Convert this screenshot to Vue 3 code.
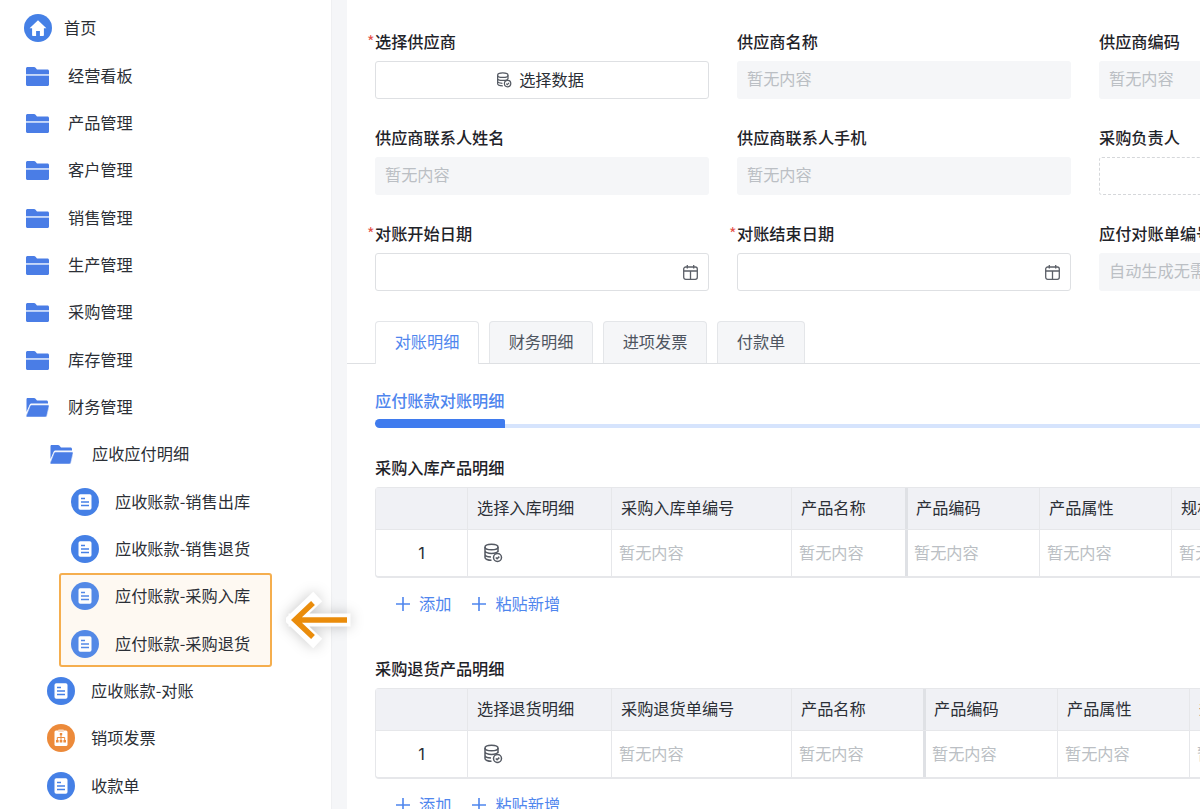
<script setup>
const navGroups = [
  { hl: false, items: [
    { label: '首页', icon: 'home', cls: 'r-home' },
    { label: '经营看板', icon: 'folder', cls: 'r-top' },
    { label: '产品管理', icon: 'folder', cls: 'r-top' },
    { label: '客户管理', icon: 'folder', cls: 'r-top' },
    { label: '销售管理', icon: 'folder', cls: 'r-top' },
    { label: '生产管理', icon: 'folder', cls: 'r-top' },
    { label: '采购管理', icon: 'folder', cls: 'r-top' },
    { label: '库存管理', icon: 'folder', cls: 'r-top' },
    { label: '财务管理', icon: 'open', cls: 'r-top' },
    { label: '应收应付明细', icon: 'open', cls: 'r-sub' },
    { label: '应收账款-销售出库', icon: 'doc', cls: 'r-leaf2' },
    { label: '应收账款-销售退货', icon: 'doc', cls: 'r-leaf2' }
  ] },
  { hl: true, items: [
    { label: '应付账款-采购入库', icon: 'doc', cls: 'r-hl' },
    { label: '应付账款-采购退货', icon: 'doc', cls: 'r-hl' }
  ] },
  { hl: false, items: [
    { label: '应收账款-对账', icon: 'doc', cls: 'r-leaf1' },
    { label: '销项发票', icon: 'org', cls: 'r-leaf1' },
    { label: '收款单', icon: 'doc', cls: 'r-leaf1' }
  ] }
]

const fields = [
  { label: '选择供应商', req: true, type: 'button' },
  { label: '供应商名称', type: 'ro', text: '暂无内容' },
  { label: '供应商编码', type: 'ro', text: '暂无内容' },
  { label: '供应商联系人姓名', type: 'ro', text: '暂无内容' },
  { label: '供应商联系人手机', type: 'ro', text: '暂无内容' },
  { label: '采购负责人', type: 'dashed' },
  { label: '对账开始日期', req: true, type: 'date' },
  { label: '对账结束日期', req: true, type: 'date' },
  { label: '应付对账单编号', type: 'ro', text: '自动生成无需填写' }
]

const tabs = ['对账明细', '财务明细', '进项发票', '付款单']

const tables = [
  { title: '采购入库产品明细', cls: 't1', pick: '选择入库明细', no: '采购入库单编号' },
  { title: '采购退货产品明细', cls: 't2', pick: '选择退货明细', no: '采购退货单编号' }
]
const restCols = ['产品名称', '产品编码', '产品属性', '规格型号']
</script>

<template>
  <div class="page">
    <aside class="side">
      <div v-for="(g, gi) in navGroups" :key="gi" class="group" :class="{ hl: g.hl }">
        <div v-for="it in g.items" :key="it.label" class="row" :class="it.cls">
          <svg v-if="it.icon === 'home'" class="ic-round" viewBox="0 0 28 28">
            <circle cx="14" cy="14" r="14" fill="#4580e6" />
            <path d="M14 6.2 5.6 14.2h2.5v7a.8.8 0 0 0 .8.8h3.2v-5h3.8v5h3.2a.8.8 0 0 0 .8-.8v-7h2.5z" fill="#fff" />
          </svg>
          <svg v-else-if="it.icon === 'folder'" class="ic-folder" viewBox="0 0 23 19">
            <path d="M1.5 0h6.6c.5 0 .9.2 1.2.5L11 2.400h10.500c.8 0 1.500.7 1.500 1.500V7H0V1.500C0 .7.700 0 1.500 0z" fill="#4a7de6" />
            <path d="M0 8.600h23v8.900c0 .8-.7 1.500-1.500 1.500h-20C.7 19 0 18.300 0 17.500z" fill="#4a7de6" />
            <rect y="7" width="23" height="1.600" fill="#c6d7f8" />
          </svg>
          <svg v-else-if="it.icon === 'open'" class="ic-folder" viewBox="0 0 23 19">
            <path d="M1.500 0h6.600c.5 0 .9.2 1.200.5L11 2.400h9.500c.8 0 1.500.7 1.500 1.500V5.500H5.600c-1 0-1.800.6-2.100 1.500L.5 14V1.500C.5.700.7 0 1.500 0z" fill="#4a7de6" />
            <path d="M5.700 7H22c.7 0 1.200.6 1 1.300L20.800 17.700c-.2.800-.9 1.300-1.700 1.300H1.400c-.8 0-1.300-.7-1.100-1.400L3.900 8.400C4.200 7.600 4.900 7 5.700 7z" fill="#4a7de6" stroke="#d5e1fa" stroke-width=".6" />
          </svg>
          <svg v-else-if="it.icon === 'doc'" class="ic-round" viewBox="0 0 28 28">
            <circle cx="14" cy="14" r="14" fill="#4580e6" />
            <rect x="7.500" y="6.200" width="13" height="15.600" rx="1.800" fill="#fff" />
            <path d="M10 10.500h4M10 14h8M10 17.500h8" stroke="#4580e6" stroke-width="1.300" fill="none" />
          </svg>
          <svg v-else class="ic-round" viewBox="0 0 28 28">
            <circle cx="14" cy="14" r="14" fill="#ec8a3a" />
            <rect x="7.500" y="6.500" width="13" height="15.500" rx="1.500" fill="#fff" />
            <rect x="11" y="5.500" width="6" height="2.600" rx="1" fill="#f8d9bf" />
            <path d="M14 10.500v3M10.300 16v-2.500h7.400V16M14 13.500V16" stroke="#ec8a3a" stroke-width="1" fill="none" />
            <path d="M9 16h2.600v2.400H9zM12.700 16h2.600v2.400h-2.600zM16.400 16H19v2.400h-2.600zM12.800 9h2.400v2.200h-2.400z" fill="#ec8a3a" />
          </svg>
          <span class="row-text">{{ it.label }}</span>
        </div>
      </div>
    </aside>
    <div class="gutter"></div>

    <svg class="arrow" viewBox="0 0 70 60" aria-hidden="true">
      <path d="M58 30H9M27 11 7 30l20 19" fill="none" stroke="#fff" stroke-width="13" stroke-linecap="square" stroke-linejoin="miter" />
      <path d="M61 30H11M27 13 9 30l18 17" fill="none" stroke="#ea8c0b" stroke-width="5.500" />
    </svg>

    <main class="main">
      <section class="form">
        <div v-for="f in fields" :key="f.label" class="field">
          <label class="flabel"><i v-if="f.req" class="req">*</i>{{ f.label }}</label>
          <div v-if="f.type === 'button'" class="ctl ctl-btn">
            <svg class="db-sm" viewBox="0 0 20 20">
              <g fill="none" stroke="#555a63" stroke-width="1.500">
                <ellipse cx="8.500" cy="4" rx="6.500" ry="2.800" />
                <path d="M2 4v10.500c0 1.500 2.900 2.800 6.500 2.800M2 7.700c0 1.500 2.900 2.800 6.500 2.800s6.500-1.300 6.500-2.800M2 11.300c0 1.500 2.900 2.700 6 2.800M15 4v5" />
                <circle cx="14.500" cy="14.500" r="4" />
                <path d="m12.800 14.500 1.300 1.300 2.200-2.200" />
              </g>
            </svg>
            <span class="tx">选择数据</span>
          </div>
          <div v-else-if="f.type === 'ro'" class="ctl ctl-ro">{{ f.text }}</div>
          <div v-else-if="f.type === 'dashed'" class="ctl ctl-dashed"></div>
          <div v-else class="ctl ctl-date">
            <svg class="cal" viewBox="0 0 15 15">
              <g fill="none" stroke="#5c6068" stroke-width="1.300">
                <rect x=".7" y="2" width="13.600" height="12.300" rx="2" />
                <path d="M.7 6h13.600M4.300 0v3.600M10.700 0v3.600M7.500 6v8.300" />
              </g>
            </svg>
          </div>
        </div>
      </section>

      <nav class="tabs">
        <div v-for="(t, i) in tabs" :key="t" class="tab" :class="{ active: i === 0 }">{{ t }}</div>
      </nav>

      <section class="detail">
        <div class="subtitle">应付账款对账明细</div>
        <div class="progress"><div class="p-on"></div><div class="p-off"></div></div>

        <div v-for="tb in tables" :key="tb.cls" class="block">
          <div class="btitle">{{ tb.title }}</div>
          <div class="table" :class="tb.cls">
            <div class="tr th">
              <div class="cell"></div>
              <div class="cell">{{ tb.pick }}</div>
              <div class="cell">{{ tb.no }}</div>
              <div v-for="(c, ci) in restCols" :key="c" class="cell" :class="{ frozen: ci === 0 }">{{ c }}</div>
            </div>
            <div class="tr td">
              <div class="cell idx">1</div>
              <div class="cell">
                <svg class="db" viewBox="0 0 20 20">
                  <g fill="none" stroke="#555a63" stroke-width="1.500">
                    <ellipse cx="8.500" cy="4" rx="6.500" ry="2.800" />
                    <path d="M2 4v10.500c0 1.500 2.900 2.800 6.500 2.800M2 7.700c0 1.500 2.900 2.800 6.500 2.800s6.500-1.300 6.500-2.800M2 11.300c0 1.500 2.900 2.700 6 2.800M15 4v5" />
                    <circle cx="14.500" cy="14.500" r="4" />
                    <path d="m12.800 14.500 1.300 1.300 2.200-2.200" />
                  </g>
                </svg>
              </div>
              <div class="cell empty">暂无内容</div>
              <div v-for="(c, ci) in restCols" :key="c" class="cell empty" :class="{ frozen: ci === 0 }">暂无内容</div>
            </div>
          </div>
          <div class="adds">
            <span class="add">
              <svg class="plus" viewBox="0 0 14 14"><path d="M7 0v14M0 7h14" stroke="#4f86ee" stroke-width="1.600" /></svg>添加
            </span>
            <span class="add">
              <svg class="plus" viewBox="0 0 14 14"><path d="M7 0v14M0 7h14" stroke="#4f86ee" stroke-width="1.600" /></svg>粘贴新增
            </span>
          </div>
        </div>
      </section>
    </main>
  </div>
</template>

<style scoped>
.page {
  position: relative;
  display: flex;
  width: 1200px;
  height: 809px;
  overflow: hidden;
  background: #fff;
  color: #1f2329;
  font-family: "Noto Sans CJK SC", "Noto Sans", sans-serif;
  font-size: 16.2px;
}
.side {
  flex: none;
  width: 331px;
  padding-top: 4.67px;
  box-sizing: border-box;
}
.gutter {
  flex: none;
  width: 16px;
  background: #f5f6f8;
  border-left: 1px solid #eff0f2;
  box-sizing: border-box;
}
.group.hl {
  width: 213px;
  height: 94.66px;
  margin-left: 59px;
  box-sizing: border-box;
  background: #fef9f2;
  border: 2px solid #f5ae4e;
  border-radius: 3px;
}
.group.hl .row:first-child { margin-top: -2px; }
.group.hl svg { opacity: 0.92; }
.row {
  display: flex;
  align-items: center;
  height: 47.33px;
  color: #2b2f36;
  line-height: 24px;
  white-space: nowrap;
}
.row-text { margin-bottom: 2px; }
.r-home { padding-left: 24px; gap: 12px; }
.r-top { padding-left: 26px; gap: 19px; }
.r-sub { padding-left: 50px; gap: 19px; }
.r-leaf2 { padding-left: 71px; gap: 16px; }
.r-leaf1 { padding-left: 47px; gap: 16px; }
.r-hl { padding-left: 10px; gap: 16px; }
.ic-round { flex: none; width: 28px; height: 28px; }
.ic-folder { flex: none; width: 23px; height: 19px; margin-top: 1px; }
.arrow {
  position: absolute;
  left: 286px;
  top: 590px;
  width: 70px;
  height: 60px;
  filter: drop-shadow(0 0 7px rgba(0, 0, 0, 0.22));
}
.main {
  flex: 1;
  min-width: 0;
}
.form {
  display: grid;
  grid-template-columns: repeat(3, 334px);
  column-gap: 28px;
  row-gap: 27px;
  padding: 30px 0 0 28px;
}
.flabel {
  position: relative;
  display: block;
  height: 24px;
  margin-bottom: 7px;
  font-weight: 500;
  line-height: 22px;
  color: #1f2329;
  white-space: nowrap;
}
.req {
  position: absolute;
  left: -8px;
  top: 0;
  font-style: normal;
  font-weight: 400;
  color: #e5534b;
}
.ctl {
  box-sizing: border-box;
  height: 38px;
  border-radius: 3px;
  line-height: 36px;
  white-space: nowrap;
}
.ctl-btn {
  display: flex;
  align-items: center;
  justify-content: center;
  gap: 7px;
  padding-right: 4px;
  border: 1px solid #dee0e3;
  color: #2b2f36;
}
.ctl-btn .tx { margin-bottom: 2px; }
.ctl-ro {
  padding: 0 10px;
  line-height: 35px;
  background: #f5f6f8;
  color: #bbbfc4;
}
.ctl-dashed {
  border: 1px dashed #d5d7da;
}
.ctl-date {
  display: flex;
  align-items: center;
  justify-content: flex-end;
  padding-right: 10px;
  border: 1px solid #dee0e3;
}
.db-sm { width: 16px; height: 16px; }
.cal { width: 15px; height: 15px; }
.tabs {
  display: flex;
  gap: 10px;
  box-sizing: border-box;
  height: 43px;
  margin-top: 30px;
  padding-left: 28px;
  border-bottom: 1px solid #dee0e3;
}
.tab {
  box-sizing: border-box;
  flex: none;
  height: 42px;
  width: 104px;
  text-align: center;
  border: 1px solid #e4e6e9;
  border-bottom: 0;
  border-radius: 4px 4px 0 0;
  background: #f5f6f8;
  line-height: 38px;
  color: #4e5560;
}
.tab:last-child { width: 88px; }
.tab.active {
  height: 43px;
  background: #fff;
  color: #4f86ee;
}
.detail {
  padding: 25px 0 0 28px;
}
.subtitle {
  height: 24px;
  font-weight: 500;
  line-height: 22px;
  color: #4f86ee;
}
.progress {
  display: flex;
  align-items: flex-end;
  margin-top: 6px;
}
.p-on {
  flex: none;
  width: 130px;
  height: 9px;
  border-radius: 8px 3px 0 8px;
  background: #3f7bee;
}
.p-off {
  flex: 1;
  height: 4px;
  background: #d6e4fd;
}
.progress + .block { margin-top: 29px; }
.block + .block { margin-top: 43px; }
.btitle {
  height: 24px;
  margin-bottom: 6px;
  font-weight: 500;
  line-height: 20px;
  color: #1f2329;
}
.table {
  box-sizing: border-box;
  width: 900px;
  border: 1px solid #e6e7ea;
  border-bottom-width: 2px;
  border-right: 0;
  border-radius: 4px 0 0 4px;
}
.tr {
  display: grid;
}
.t1 .tr { grid-template-columns: 92px 144px 180px 116px 132px 132px 140px; }
.t2 .tr { grid-template-columns: 92px 144px 180px 134px 132px 132px 140px; }
.th {
  height: 42px;
  background: #f0f1f5;
  border-bottom: 1px solid #e6e7ea;
  box-sizing: border-box;
}
.td { height: 46px; }
.cell {
  box-sizing: border-box;
  display: flex;
  align-items: center;
  min-width: 0;
  padding: 0 0 2px 9px;
  border-right: 1px solid #e6e7ea;
  white-space: nowrap;
  overflow: hidden;
}
.th .cell { padding-bottom: 4px; color: #2b2f36; }
.cell.frozen { border-right: 3px solid #dfe1e5; }
.cell.frozen + .cell { padding-left: 8px; }
.cell.empty { padding-left: 7px; color: #bbbfc4; }
.cell.empty.frozen + .cell.empty { padding-left: 6px; }
.cell.idx {
  justify-content: center;
  padding: 0;
  font-family: "Inter", "Noto Sans", sans-serif;
  color: #2b2f36;
}
.td .cell:nth-child(2) { padding: 0 0 0 15px; }
.db { width: 20px; height: 20px; }
.adds {
  display: flex;
  gap: 21px;
  height: 24px;
  margin-top: 13px;
  padding-left: 21px;
}
.add {
  display: flex;
  align-items: center;
  gap: 9px;
  color: #4f86ee;
  line-height: 22px;
  white-space: nowrap;
}
.plus { width: 14px; height: 14px; margin-top: 2px; }
</style>

<style>
html, body { margin: 0; padding: 0; overflow: hidden; }
</style>
